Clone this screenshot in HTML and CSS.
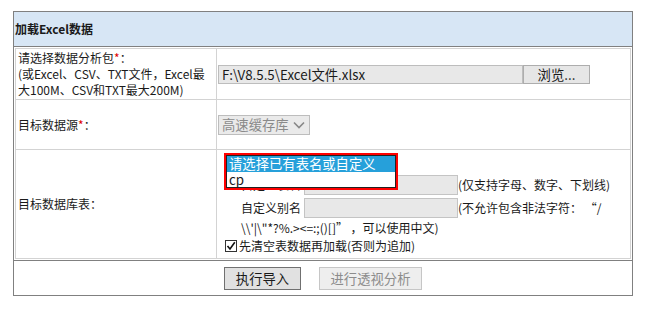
FILE: index.html
```html
<!DOCTYPE html>
<html>
<head>
  <meta charset="UTF-8">
  <title>加载Excel数据</title>
  <link rel="stylesheet" href="styles.css">
</head>
<body>
<div class="panel">
  <div class="panel-head">加载Excel数据</div>
  <div class="panel-body">
    <table class="form">
      <tr class="row-file">
        <td class="label">请选择数据分析包<span class="req">*</span>：<br>(或Excel、CSV、TXT文件，Excel最<br>大100M、CSV和TXT最大200M)</td>
        <td class="field">
          <div class="file-pick">
            <span class="file-path">F:\V8.5.5\Excel文件.xlsx</span>
            <span class="browse">浏览...</span>
          </div>
        </td>
      </tr>
      <tr class="row-source">
        <td class="label">目标数据源<span class="req">*</span>：</td>
        <td class="field">
          <span class="select disabled">高速缓存库
            <svg class="chev" width="12" height="8" viewBox="0 0 12 8"><path d="M1 1.5 L6 6.5 L11 1.5" fill="none" stroke="#888" stroke-width="1.6"/></svg>
          </span>
        </td>
      </tr>
      <tr class="row-table">
        <td class="label">目标数据库表：</td>
        <td class="field top">
          <div class="pick">
            <span class="select">请选择已有表名或自定义</span>
            <ul class="droplist">
              <li class="on">请选择已有表名或自定义</li>
              <li>cp</li>
            </ul>
          </div>
          <div class="line">
            <span class="name">自定义表名</span><span class="box"></span><span class="hint">(仅支持字母、数字、下划线)</span>
          </div>
          <div class="line alias">
            <span class="name">自定义别名</span><span class="box"></span><span class="hint">(不允许包含非法字符： “/<br>\\'|\"*?%.&gt;&lt;=:;()[]” ，可以使用中文)</span>
          </div>
          <div class="check">
            <span class="tick"><svg width="10" height="10" viewBox="0 0 10 10"><path d="M1.5 5 L4 8 L8.8 1.2" fill="none" stroke="#111" stroke-width="1.6"/></svg></span>先清空表数据再加载(否则为追加)
          </div>
        </td>
      </tr>
    </table>
  </div>
  <div class="panel-foot">
    <button class="btn">执行导入</button>
    <button class="btn" disabled>进行透视分析</button>
  </div>
</div>
</body>
</html>
```

FILE: styles.css
```css
body {
  margin: 0;
  font-family: "Noto Sans CJK SC", "Liberation Sans", sans-serif;
  font-size: 12px;
  color: #1a1a1a;
}
.panel {
  width: 620px;
  margin: 11px 0 0 13px;
  border: 1px solid #808080;
  box-sizing: border-box;
}
.panel-head {
  height: 34px;
  line-height: 34px;
  padding-left: 1px;
  background: #d7e6f5;
  border-bottom: 1px solid #808080;
  font-weight: bold;
}
.panel-body {
  padding: 1px;
}
.form {
  width: 100%;
  border-collapse: collapse;
}
.form td {
  border: 1px solid #d3d3d3;
  padding: 0;
  vertical-align: middle;
}
.form .label {
  width: 198px;
  padding-left: 2px;
  line-height: 16px;
  white-space: nowrap;
}
.form .field {
  padding-left: 1px;
}
.form .top {
  vertical-align: top;
}
.row-file td { height: 50px; }
.row-source td { height: 49px; }
.row-table td { height: 108px; }
.req {
  color: #e00000;
}

/* file picker */
.file-pick {
  display: flex;
  height: 19px;
}
.file-path {
  box-sizing: border-box;
  width: 305px;
  border: 1px solid #bdbdbd;
  background: #e8e8e8;
  font-size: 13.33px;
  line-height: 17px;
  padding-left: 3px;
}
.browse {
  box-sizing: border-box;
  width: 67px;
  border: 1px solid #adadad;
  background: #e6e6e6;
  font-size: 13.33px;
  line-height: 17px;
  text-align: center;
}

/* selects */
.select {
  display: inline-flex;
  align-items: center;
  height: 20px;
  box-sizing: border-box;
  padding: 0 2px 0 3px;
  border: 1px solid #bdbdbd;
  background: #f0f0f0;
  font-size: 13.33px;
}
.select.disabled {
  width: 92px;
  color: #8a8a8a;
  background: #eaeaea;
}
.chev {
  margin-left: 4px;
}
.pick {
  position: relative;
  height: 20px;
  margin: 3px 0 0 6px;
}
.droplist {
  position: absolute;
  top: 0;
  left: 0;
  z-index: 2;
  width: 174px;
  margin: 0;
  padding: 0;
  list-style: none;
  box-sizing: border-box;
  border: 2px solid #ff0000;
  box-shadow: inset 0 0 0 1px #222;
  background: #fff;
  font-size: 13.33px;
}
.droplist li {
  height: 16px;
  line-height: 16px;
  margin: 0 1px;
  padding-left: 2px;
}
.droplist li:first-child { margin-top: 1px; }
.droplist li:last-child { margin-bottom: 1px; height: 15px; }
.droplist .on {
  background: #26a0da;
  color: #fff;
}

/* custom name rows */
.line {
  margin: 2px 0 0 23px;
  line-height: 20px;
}
.line.alias {
  margin-top: 3px;
}
.name {
  display: inline-block;
  width: 63px;
  vertical-align: top;
}
.box {
  display: inline-block;
  width: 152px;
  height: 18px;
  border: 1px solid #c4c4c4;
  background: #e8e8e8;
  vertical-align: top;
}
.hint {
  vertical-align: top;
}
.check {
  display: flex;
  align-items: center;
  height: 14px;
  margin: 1px 0 0 7px;
  line-height: 14px;
}
.tick {
  display: inline-flex;
  align-items: center;
  justify-content: center;
  width: 10px;
  height: 10px;
  margin-right: 2px;
  border: 1px solid #333;
  background: #fff;
}

/* footer buttons */
.panel-foot {
  height: 34px;
  border-top: 1px solid #808080;
  display: flex;
  justify-content: center;
  align-items: center;
  gap: 18px;
}
.btn {
  height: 23px;
  padding: 0;
  border: 1px solid #707070;
  background: #e1e1e1;
  font-family: inherit;
  font-size: 13.33px;
  color: #1a1a1a;
  white-space: nowrap;
}
.btn:first-child {
  width: 77px;
}
.btn:disabled {
  width: 103px;
  border-color: #c6c6c6;
  background: #eeeeee;
  color: #8c8c8c;
}
```
